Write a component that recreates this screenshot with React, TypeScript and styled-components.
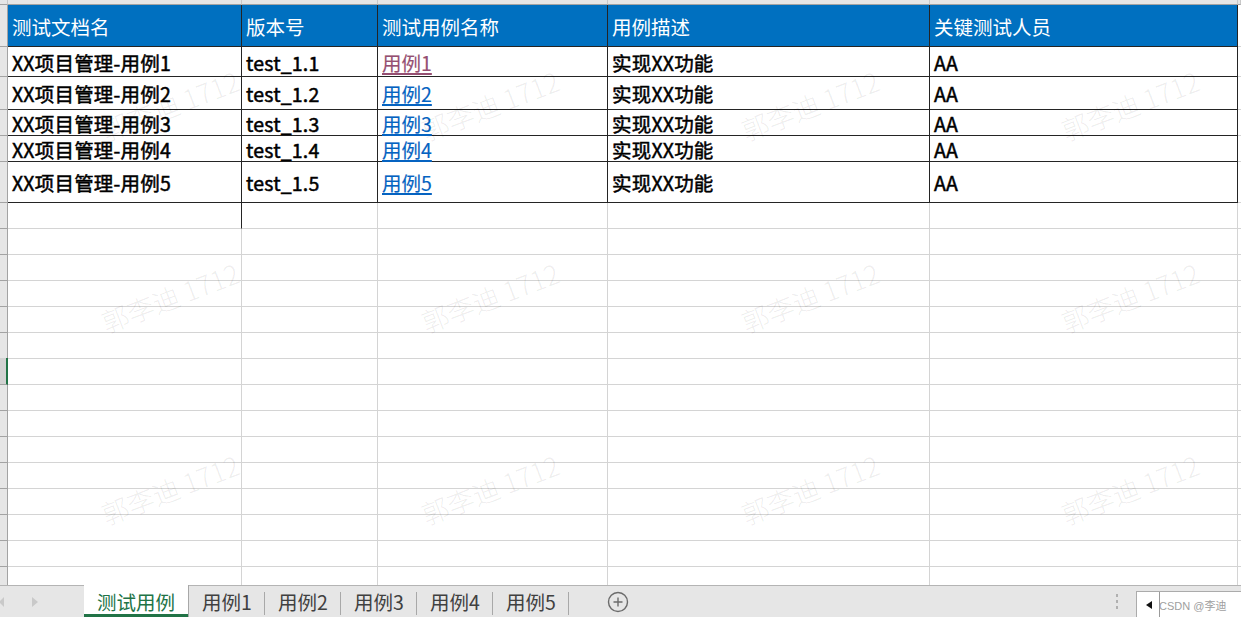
import React from "react";
import styled, { createGlobalStyle, css } from "styled-components";

const GlobalStyle = createGlobalStyle`
  html, body { margin: 0; padding: 0; background: #fff; }
  body {
    font-family: "Noto Sans CJK SC", "Noto Sans", sans-serif;
    overflow: hidden;
  }
`;

const COLS = "8px 234px 136px 230px 322px 308px 1fr";
const DARK = "#242424";
const GRID = "#d4d4d4";
const HEAD_LINE = "#a3a3a3";

const Page = styled.div`
  position: relative;
  width: 1241px;
  height: 617px;
  display: flex;
  flex-direction: column;
  overflow: hidden;
  background: #fff;
`;

const Sheet = styled.div`
  flex: 1;
  min-height: 0;
  display: flex;
  flex-direction: column;
  overflow: hidden;
`;

const Row = styled.div<{ $h: number }>`
  display: grid;
  grid-template-columns: ${COLS};
  height: ${(p) => p.$h}px;
  flex: none;
`;

const ColHead = styled.div`
  box-sizing: border-box;
  background: #e6e6e6;
  border-right: 1px solid #c8c8c8;
  border-bottom: 1px solid ${HEAD_LINE};
`;

const RowHead = styled.div<{ $selected?: boolean }>`
  box-sizing: border-box;
  background: ${(p) => (p.$selected ? "#d2d2d2" : "#e6e6e6")};
  border-right: 1px solid ${HEAD_LINE};
  border-bottom: 1px solid ${HEAD_LINE};
  ${(p) =>
    p.$selected &&
    css`
      border-right: 2px solid #217346;
      margin-top: -1px;
    `}
`;

type Kind = "head" | "data" | "empty";

const Cell = styled.div<{ $kind: Kind; $darkRight?: boolean }>`
  box-sizing: border-box;
  display: flex;
  align-items: center;
  padding: 2px 4px 0 4px;
  white-space: nowrap;
  font-size: 19.5px;
  line-height: 1;
  border-right: 1px solid ${(p) => (p.$kind === "empty" && !p.$darkRight ? GRID : DARK)};
  border-bottom: 1px solid ${(p) => (p.$kind === "empty" ? GRID : DARK)};
  ${(p) =>
    p.$kind === "head" &&
    css`
      background: #0070c0;
      color: #fff;
      font-weight: 400;
    `}
  ${(p) =>
    p.$kind === "data" &&
    css`
      color: #000;
      font-weight: 400;
      letter-spacing: 0.2px;
      -webkit-text-stroke: 0.5px #000;
    `}
`;

const Link = styled.span<{ $visited?: boolean }>`
  font-weight: 400;
  letter-spacing: 0;
  -webkit-text-stroke: 0.15px currentColor;
  color: ${(p) => (p.$visited ? "#954f72" : "#0563c1")};
  text-decoration: underline;
  text-decoration-thickness: 1.5px;
  text-underline-offset: 2px;
`;

const TabBar = styled.div`
  flex: none;
  height: 32px;
  box-sizing: border-box;
  border-top: 1px solid #b4b4b4;
  background: #e6e6e6;
  display: flex;
  align-items: stretch;
  font-size: 19.5px;
`;

const Nav = styled.div`
  width: 84px;
  flex: none;
  display: flex;
  align-items: center;
`;

const NavArrow = styled.span<{ $dir: "l" | "r" }>`
  width: 0;
  height: 0;
  border-top: 5px solid transparent;
  border-bottom: 5px solid transparent;
  ${(p) =>
    p.$dir === "l"
      ? css`
          border-right: 5px solid #c9c9c9;
          margin-left: -1px;
        `
      : css`
          border-left: 6px solid #c9c9c9;
          margin-left: 28px;
        `}
`;

const ActiveTab = styled.div`
  margin-top: -1px;
  background: #fff;
  color: #217346;
  display: flex;
  align-items: center;
  justify-content: center;
  border-right: 1px solid #a8a8a8;
  box-shadow: inset 0 -3px 0 #217346;
  width: 105px;
  box-sizing: border-box;
`;

const Tab = styled.div`
  position: relative;
  width: 76px;
  box-sizing: border-box;
  display: flex;
  align-items: center;
  justify-content: center;
  color: #404040;
  padding-bottom: 1px;
  &::after {
    content: "";
    position: absolute;
    right: 0;
    top: 6px;
    bottom: 2px;
    width: 1px;
    background: #a8a8a8;
  }
`;

const AddBtn = styled.div`
  margin-left: 38px;
  display: flex;
  align-items: center;
`;

const Spacer = styled.div`
  flex: 1;
`;

const Dots = styled.div`
  width: 8px;
  margin-right: 15px;
  display: flex;
  flex-direction: column;
  align-items: center;
  justify-content: center;
  gap: 3px;
  & > i {
    width: 2px;
    height: 3px;
    background: #b0b0b0;
  }
`;

const ScrollBox = styled.div`
  position: relative;
  width: 105px;
  margin-top: 5px;
  background: #fff;
  border: 1px solid #ababab;
  border-bottom: none;
  border-right: none;
  box-sizing: border-box;
  display: flex;
  align-items: center;
`;

const ScrollArrow = styled.span`
  margin-left: 9px;
  width: 0;
  height: 0;
  border-top: 4px solid transparent;
  border-bottom: 4px solid transparent;
  border-right: 6px solid #111;
`;

const ScrollThumb = styled.span`
  margin-left: 7px;
  align-self: stretch;
  width: 1px;
  background: #9a9a9a;
`;

const Credit = styled.span`
  position: absolute;
  left: 22px;
  top: 50%;
  transform: translateY(-50%);
  font-family: "Liberation Sans", "Noto Sans CJK SC", sans-serif;
  font-size: 11px;
  color: #a0a0a0;
  white-space: nowrap;
  pointer-events: none;
`;

const Marks = styled.div`
  position: absolute;
  inset: 0;
  pointer-events: none;
  overflow: hidden;
`;

const Mark = styled.span<{ $x: number; $y: number }>`
  position: absolute;
  left: ${(p) => p.$x}px;
  top: ${(p) => p.$y}px;
  transform: translate(-50%, -50%) rotate(-21deg);
  font-size: 27px;
  font-weight: 300;
  color: rgba(0, 0, 0, 0.075);
  white-space: nowrap;
  font-family: "Noto Sans CJK SC", sans-serif;
`;

const headers = ["测试文档名", "版本号", "测试用例名称", "用例描述", "关键测试人员"];
const rows = [
  { h: 30, n: 1 },
  { h: 33, n: 2 },
  { h: 26, n: 3 },
  { h: 26, n: 4 },
  { h: 41, n: 5 },
];

export default function App() {
  const empties = Array.from({ length: 15 }, (_, i) => i);
  return (
    <Page>
      <GlobalStyle />
      <Sheet>
        <Row $h={5}>
          <ColHead />
          <ColHead />
          <ColHead />
          <ColHead />
          <ColHead />
          <ColHead />
          <ColHead />
        </Row>
        <Row $h={42}>
          <RowHead />
          {headers.map((h) => (
            <Cell key={h} $kind="head">
              {h}
            </Cell>
          ))}
          <Cell $kind="empty" />
        </Row>
        {rows.map((r) => (
          <Row key={r.n} $h={r.h}>
            <RowHead />
            <Cell $kind="data">XX项目管理-用例{r.n}</Cell>
            <Cell $kind="data">test_1.{r.n}</Cell>
            <Cell $kind="data">
              <Link $visited={r.n === 1}>用例{r.n}</Link>
            </Cell>
            <Cell $kind="data">实现XX功能</Cell>
            <Cell $kind="data">AA</Cell>
            <Cell $kind="empty" />
          </Row>
        ))}
        {empties.map((i) => (
          <Row key={`e${i}`} $h={26}>
            <RowHead $selected={i === 6} />
            <Cell $kind="empty" $darkRight={i === 0} />
            <Cell $kind="empty" />
            <Cell $kind="empty" />
            <Cell $kind="empty" />
            <Cell $kind="empty" />
            <Cell $kind="empty" />
          </Row>
        ))}
      </Sheet>
      <TabBar>
        <Nav>
          <NavArrow $dir="l" />
          <NavArrow $dir="r" />
        </Nav>
        <ActiveTab>测试用例</ActiveTab>
        {[1, 2, 3, 4, 5].map((n) => (
          <Tab key={n}>用例{n}</Tab>
        ))}
        <AddBtn>
          <svg width="22" height="22" viewBox="0 0 22 22">
            <circle cx="11" cy="11" r="9.5" fill="none" stroke="#6b6b6b" strokeWidth="1.4" />
            <path d="M11 6.5v9M6.5 11h9" stroke="#6b6b6b" strokeWidth="1.4" />
          </svg>
        </AddBtn>
        <Spacer />
        <Dots>
          <i />
          <i />
          <i />
        </Dots>
        <ScrollBox>
          <ScrollArrow />
          <ScrollThumb />
          <Credit>CSDN @李迪</Credit>
        </ScrollBox>
      </TabBar>
      <Marks>
        {[105, 297, 489].map((y) =>
          [170, 490, 810, 1130].map((x) => (
            <Mark key={`${x}-${y}`} $x={x} $y={y}>
              郭李迪 1712
            </Mark>
          ))
        )}
      </Marks>
    </Page>
  );
}
